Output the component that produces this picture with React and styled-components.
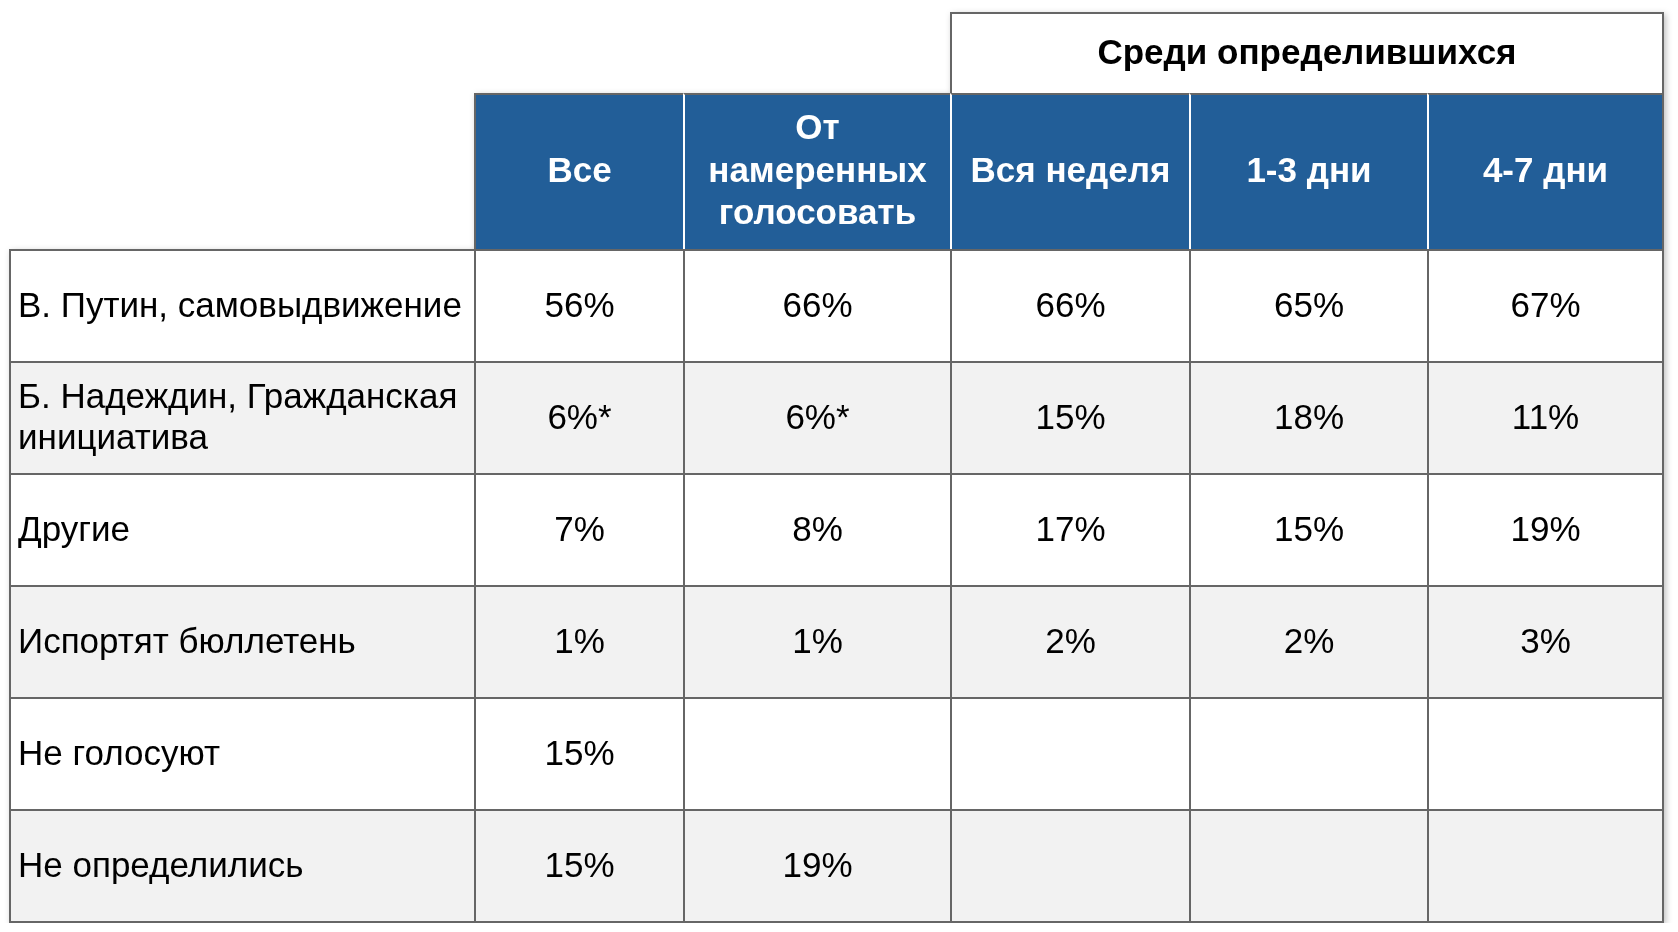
import React from "react";
import styled, { createGlobalStyle } from "styled-components";

const GlobalStyle = createGlobalStyle`
  html, body { margin: 0; padding: 0; background: #ffffff; }
  body { font-family: "Liberation Sans", Arial, Helvetica, sans-serif; color: #000; }
`;

const LINE = "#666666";
const BLUE = "#225e98";

const Page = styled.div`
  padding: 12px 0 0 9px;
`;

const Grid = styled.div`
  display: grid;
  grid-template-columns: 465px 209px 267px 239px 238px 237px;
  grid-template-rows: 81px 156px repeat(5, 112px) 114px;
  width: max-content;
  filter: drop-shadow(2px 2px 3px rgba(0, 0, 0, 0.25));
`;

const Blank = styled.div`
  grid-column: ${(p) => p.$span};
`;

const SuperHeader = styled.div`
  grid-column: 4 / span 3;
  box-sizing: border-box;
  border: 2px solid ${LINE};
  border-bottom: none;
  background: #ffffff;
  display: flex;
  align-items: center;
  justify-content: center;
  font-weight: 700;
  font-size: 35px;
  padding-bottom: 4px;
`;

const HeadCell = styled.div`
  box-sizing: border-box;
  background: ${BLUE};
  color: #ffffff;
  font-weight: 700;
  font-size: 35px;
  line-height: 42.5px;
  text-align: center;
  display: flex;
  align-items: center;
  justify-content: center;
  border-top: 2px solid ${LINE};
  border-left: 2px solid ${(p) => (p.$first ? LINE : "#ffffff")};
  border-right: ${(p) => (p.$last ? `2px solid ${LINE}` : "none")};
  padding: 0 2px 4px;
  white-space: nowrap;
`;

const BodyCell = styled.div`
  box-sizing: border-box;
  background: ${(p) => (p.$shade ? "#f2f2f2" : "#ffffff")};
  border-top: 2px solid ${LINE};
  border-left: 2px solid ${LINE};
  border-right: ${(p) => (p.$last ? `2px solid ${LINE}` : "none")};
  border-bottom: ${(p) => (p.$bottom ? `2px solid ${LINE}` : "none")};
  font-size: 35px;
  line-height: 41px;
  display: flex;
  align-items: center;
  justify-content: ${(p) => (p.$label ? "flex-start" : "center")};
  text-align: ${(p) => (p.$label ? "left" : "center")};
  padding: ${(p) => (p.$label ? "0 0 4px 7px" : "0 0 4px")};
  white-space: nowrap;
`;

const headers = ["Все", "От\nнамеренных\nголосовать", "Вся неделя", "1-3 дни", "4-7 дни"];

const rows = [
  ["В. Путин, самовыдвижение", "56%", "66%", "66%", "65%", "67%"],
  ["Б. Надеждин, Гражданская\nинициатива", "6%*", "6%*", "15%", "18%", "11%"],
  ["Другие", "7%", "8%", "17%", "15%", "19%"],
  ["Испортят бюллетень", "1%", "1%", "2%", "2%", "3%"],
  ["Не голосуют", "15%", "", "", "", ""],
  ["Не определились", "15%", "19%", "", "", ""],
];

const Lines = ({ text }) =>
  text.split("\n").map((t, i, arr) => (
    <React.Fragment key={i}>
      {t}
      {i < arr.length - 1 && <br />}
    </React.Fragment>
  ));

export default function App() {
  return (
    <>
      <GlobalStyle />
      <Page>
        <Grid>
          <Blank $span="1 / span 3" />
          <SuperHeader>Среди определившихся</SuperHeader>
          <Blank $span="1 / span 1" />
          {headers.map((h, i) => (
            <HeadCell key={h} $first={i === 0} $last={i === headers.length - 1}>
              <div>
                <Lines text={h} />
              </div>
            </HeadCell>
          ))}
          {rows.map((r, ri) =>
            r.map((c, ci) => (
              <BodyCell
                key={`${ri}-${ci}`}
                $shade={ri % 2 === 1}
                $label={ci === 0}
                $last={ci === r.length - 1}
                $bottom={ri === rows.length - 1}
              >
                <div>
                  <Lines text={c} />
                </div>
              </BodyCell>
            ))
          )}
        </Grid>
      </Page>
    </>
  );
}
